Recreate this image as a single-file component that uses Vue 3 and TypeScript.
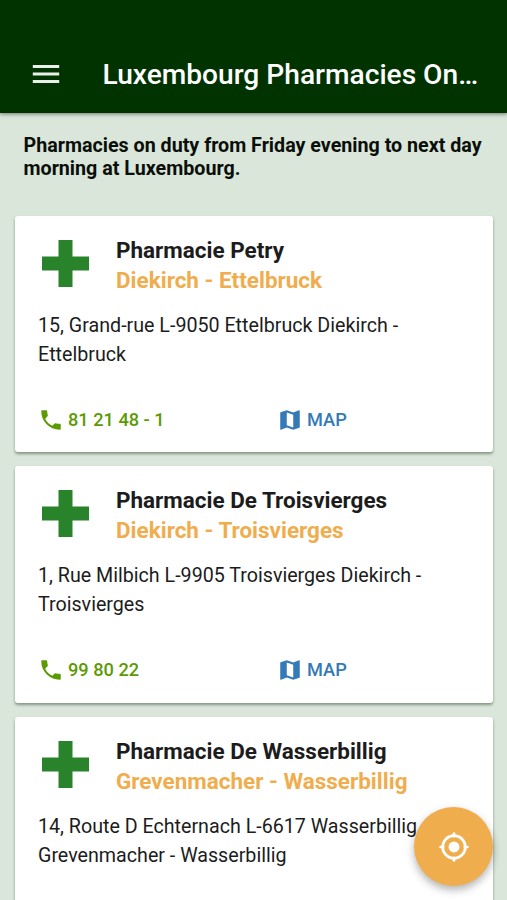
<script setup lang="ts">
interface Pharmacy {
  name: string
  area: string
  address: string[]
  phone: string
}

const pharmacies: Pharmacy[] = [
  {
    name: 'Pharmacie Petry',
    area: 'Diekirch - Ettelbruck',
    address: ['15, Grand-rue L-9050 Ettelbruck Diekirch -', 'Ettelbruck'],
    phone: '81 21 48 - 1',
  },
  {
    name: 'Pharmacie De Troisvierges',
    area: 'Diekirch - Troisvierges',
    address: ['1, Rue Milbich L-9905 Troisvierges Diekirch -', 'Troisvierges'],
    phone: '99 80 22',
  },
  {
    name: 'Pharmacie De Wasserbillig',
    area: 'Grevenmacher - Wasserbillig',
    address: ['14, Route D Echternach L-6617 Wasserbillig', 'Grevenmacher - Wasserbillig'],
    phone: '',
  },
]
</script>

<template>
  <div class="screen">
    <header class="bar">
      <button class="menu" aria-label="Menu">
        <svg viewBox="0 0 24 24"><path d="M3.2 18h17.6v-2H3.2v2zm0-5h17.6v-2H3.2v2zm0-7v2h17.6V6H3.2z" /></svg>
      </button>
      <h1 class="title">Luxembourg Pharmacies On…</h1>
    </header>

    <main class="content">
      <p class="intro">Pharmacies on duty from Friday evening to next day<br />morning at Luxembourg.</p>

      <section class="list">
        <article v-for="p in pharmacies" :key="p.name" class="card">
          <div class="head">
            <svg class="cross" viewBox="0 0 47 47"><path d="M16.5 0h14v16.5H47v14H30.5V47h-14V30.5H0v-14h16.5z" /></svg>
            <div class="names">
              <h2 class="name">{{ p.name }}</h2>
              <h3 class="area">{{ p.area }}</h3>
            </div>
          </div>
          <p class="address">
            <span v-for="line in p.address" :key="line" class="line">{{ line }}</span>
          </p>
          <div v-if="p.phone" class="actions">
            <a class="action phone">
              <svg viewBox="0 0 24 24"><path d="M6.62 10.79c1.44 2.83 3.76 5.14 6.59 6.59l2.2-2.2c.27-.27.67-.36 1.02-.24 1.12.37 2.33.57 3.57.57.55 0 1 .45 1 1V20c0 .55-.45 1-1 1-9.39 0-17-7.61-17-17 0-.55.45-1 1-1h3.5c.55 0 1 .45 1 1 0 1.25.2 2.45.57 3.57.11.35.03.74-.25 1.02l-2.2 2.2z" /></svg>
              <span>{{ p.phone }}</span>
            </a>
            <a class="action map">
              <svg viewBox="0 0 24 24"><path d="M20.5 3l-.16.03L15 5.1 9 3 3.36 4.9c-.21.07-.36.25-.36.48V20.5c0 .28.22.5.5.5l.16-.03L9 18.9l6 2.1 5.64-1.9c.21-.07.36-.25.36-.48V3.5c0-.28-.22-.5-.5-.5zM15 19l-6-2.11V5l6 2.11V19z" /></svg>
              <span>MAP</span>
            </a>
          </div>
        </article>
      </section>
    </main>

    <button class="fab" aria-label="Locate">
      <svg viewBox="0 0 24 24">
        <circle cx="12" cy="12" r="4.1" />
        <circle class="ring" cx="12" cy="12" r="8.5" />
        <path class="ring" d="M12 1.9v2M12 20.1v2M1.9 12h2M20.1 12h2" />
      </svg>
    </button>
  </div>
</template>

<style>
body {
  margin: 0;
  background: #dae6da;
}
</style>

<style scoped>
.screen {
  position: relative;
  box-sizing: border-box;
  width: 507px;
  height: 900px;
  overflow: hidden;
  display: flex;
  flex-direction: column;
  background: #dae6da;
  font-family: Roboto, 'Liberation Sans', sans-serif;
  color: #1c1c1c;
}
h1,
h2,
h3,
p {
  margin: 0;
}
button {
  border: 0;
  padding: 0;
  background: none;
}
svg {
  display: block;
  flex: none;
  fill: currentColor;
}
.bar {
  flex: none;
  box-sizing: border-box;
  height: 113px;
  padding: 35px 28px 0;
  display: flex;
  align-items: center;
  background: #003300;
  color: #fff;
  box-shadow: 0 1px 4px rgba(0, 0, 0, 0.5);
}
.menu {
  color: #e8f0e8;
}
.menu svg {
  width: 36px;
  height: 36px;
}
.title {
  margin-left: 38.4px;
  padding-top: 2px;
  font-size: 28.15px;
  line-height: 36px;
  font-weight: 500;
  white-space: nowrap;
}
.content {
  flex: 1;
  min-height: 0;
  padding: 22px 14px 0 15px;
}
.intro {
  padding-left: 8.5px;
  font-size: 19.68px;
  line-height: 22.5px;
  font-weight: 700;
  color: #0a0f0a;
  white-space: nowrap;
}
.list {
  margin-top: 36px;
  display: flex;
  flex-direction: column;
  gap: 14px;
}
.card {
  box-sizing: border-box;
  height: 236px;
  flex: none;
  padding: 20px 23px 0;
  display: flex;
  flex-direction: column;
  background: #fff;
  border-radius: 3px;
  box-shadow: 0 2px 3px rgba(0, 30, 0, 0.4);
}
.card:nth-child(2) {
  height: 237.4px;
}
.head {
  display: flex;
}
.cross {
  width: 47px;
  height: 47px;
  margin: 4px 27px 0 4px;
  color: #29832b;
}
.name,
.area {
  font-size: 22.48px;
  line-height: 29.5px;
  font-weight: 700;
  white-space: nowrap;
}
.area {
  color: #f0ad4e;
}
.address {
  margin-top: 15.6px;
  font-size: 19.66px;
  line-height: 29.5px;
}
.line {
  display: block;
  white-space: nowrap;
}
.actions {
  margin-top: 37px;
  display: flex;
}
.action {
  flex: 0 0 239px;
  display: flex;
  align-items: center;
  gap: 4px;
  font-size: 18.2px;
  line-height: 26px;
  font-weight: 500;
  white-space: nowrap;
}
.action svg {
  width: 26px;
  height: 26px;
}
.phone {
  color: #5c9a04;
}
.map {
  flex: none;
  color: #337ab7;
}
.fab {
  position: absolute;
  left: 414px;
  top: 807px;
  width: 79px;
  height: 79px;
  border-radius: 50%;
  display: flex;
  align-items: center;
  justify-content: center;
  background: #f0ad4e;
  color: #fff;
  box-shadow: 0 4px 8px rgba(0, 0, 0, 0.3);
}
.fab svg {
  width: 32px;
  height: 32px;
}
.ring {
  fill: none;
  stroke: currentColor;
  stroke-width: 2;
  stroke-linecap: round;
}
</style>
